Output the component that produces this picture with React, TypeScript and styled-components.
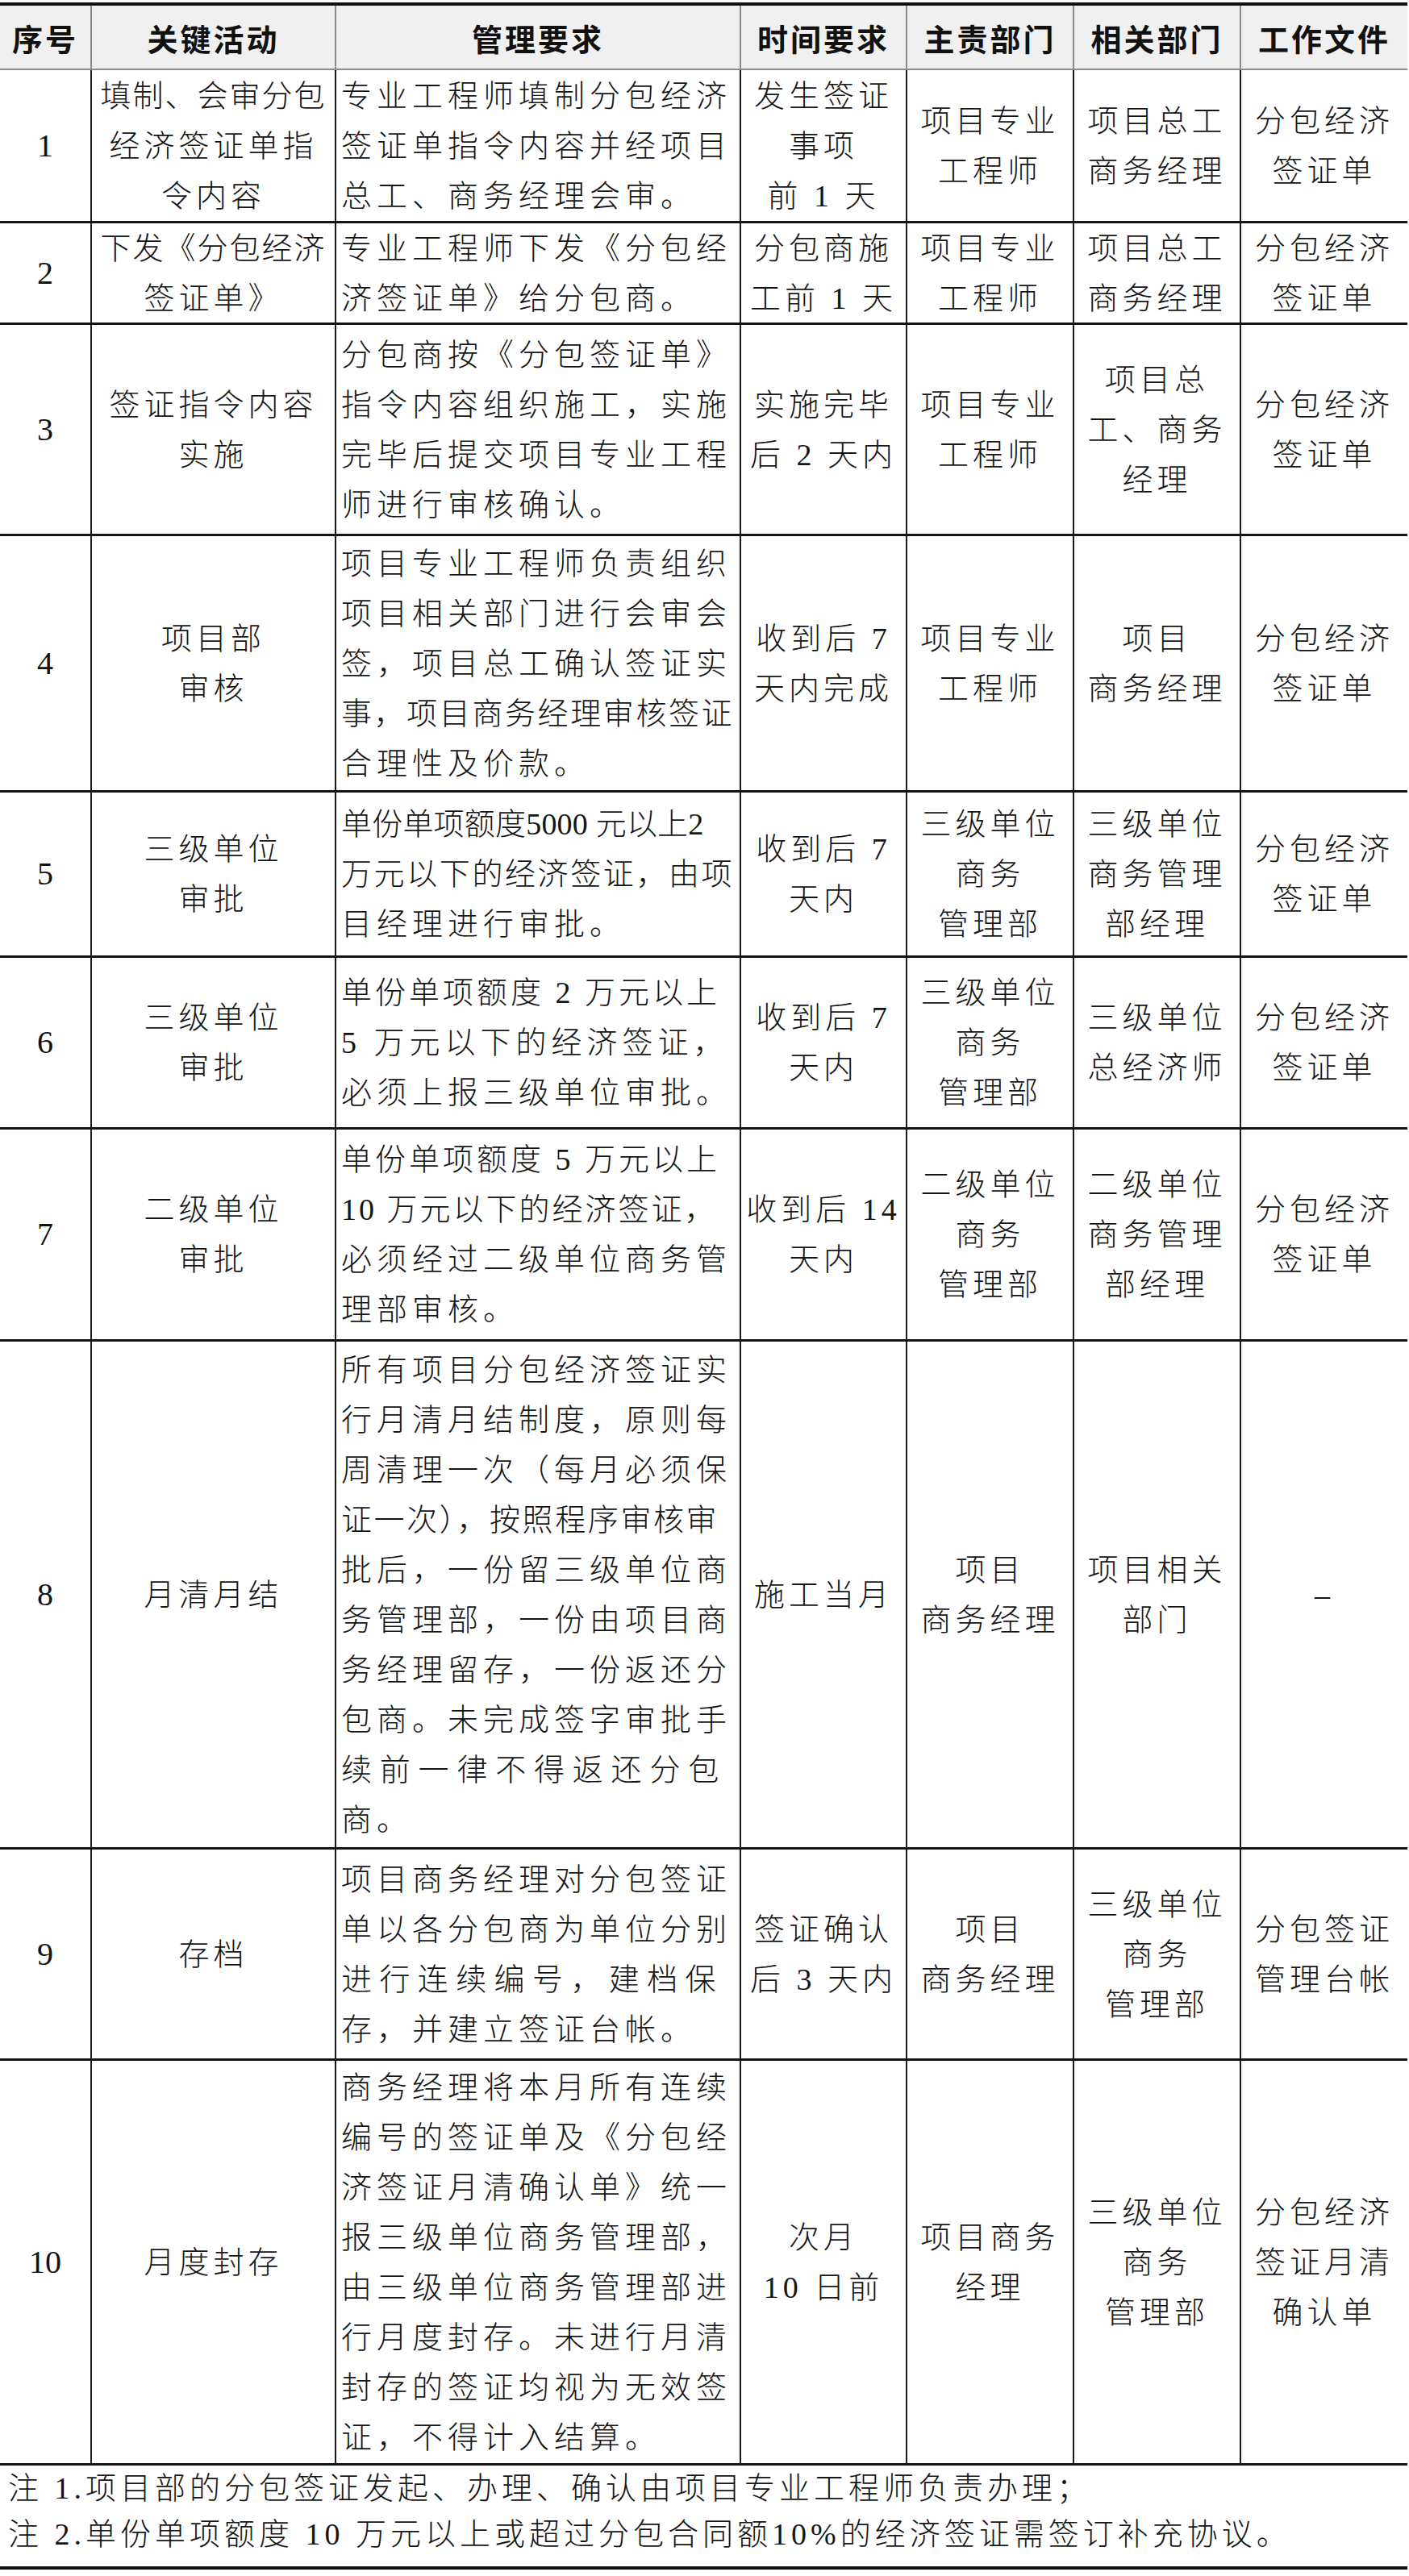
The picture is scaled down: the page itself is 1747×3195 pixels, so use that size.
import styled, { createGlobalStyle } from 'styled-components'

const GlobalStyle = createGlobalStyle`
  html, body {
    margin: 0;
    padding: 0;
    background: #fff;
  }
  body {
    font-family: "Liberation Serif", "Noto Sans CJK SC", serif;
    color: #111;
  }
`

// column widths, borders included (boundaries at 113 / 416 / 918 / 1124 / 1331 / 1538)
const COLS = '112px 303px 502px 206px 207px 207px 208px'

type Ln = string | [string, number]

type Item = {
  no: string
  h: number
  act: Ln[]
  req: Ln[]
  time: Ln[]
  main: Ln[]
  rel: Ln[]
  doc: Ln[]
}

const HEAD = ['序号', '关键活动', '管理要求', '时间要求', '主责部门', '相关部门', '工作文件']

const ROWS: Item[] = [
  {
    no: '1',
    h: 190,
    act: [['填制、会审分包', 2], '经济签证单指', '令内容'],
    req: ['专业工程师填制分包经济', '签证单指令内容并经项目', '总工、商务经理会审。'],
    time: ['发生签证', '事项', '前 1 天'],
    main: ['项目专业', '工程师'],
    rel: ['项目总工', '商务经理'],
    doc: ['分包经济', '签证单'],
  },
  {
    no: '2',
    h: 126,
    act: [['下发《分包经济', 2], '签证单》'],
    req: ['专业工程师下发《分包经', '济签证单》给分包商。'],
    time: ['分包商施', '工前 1 天'],
    main: ['项目专业', '工程师'],
    rel: ['项目总工', '商务经理'],
    doc: ['分包经济', '签证单'],
  },
  {
    no: '3',
    h: 262,
    act: ['签证指令内容', '实施'],
    req: ['分包商按《分包签证单》', '指令内容组织施工，实施', '完毕后提交项目专业工程', '师进行审核确认。'],
    time: ['实施完毕', '后 2 天内'],
    main: ['项目专业', '工程师'],
    rel: ['项目总', '工、商务', '经理'],
    doc: ['分包经济', '签证单'],
  },
  {
    no: '4',
    h: 318,
    act: ['项目部', '审核'],
    req: [
      '项目专业工程师负责组织',
      '项目相关部门进行会审会',
      '签，项目总工确认签证实',
      ['事，项目商务经理审核签证', 2.6],
      '合理性及价款。',
    ],
    time: ['收到后 7', '天内完成'],
    main: ['项目专业', '工程师'],
    rel: ['项目', '商务经理'],
    doc: ['分包经济', '签证单'],
  },
  {
    no: '5',
    h: 205,
    act: ['三级单位', '审批'],
    req: [['单份单项额度5000 元以上2', 0.2], ['万元以下的经济签证，由项', 2.6], '目经理进行审批。'],
    time: ['收到后 7', '天内'],
    main: ['三级单位', '商务', '管理部'],
    rel: ['三级单位', '商务管理', '部经理'],
    doc: ['分包经济', '签证单'],
  },
  {
    no: '6',
    h: 213,
    act: ['三级单位', '审批'],
    req: [['单份单项额度 2 万元以上', 4], '5 万元以下的经济签证，', '必须上报三级单位审批。'],
    time: ['收到后 7', '天内'],
    main: ['三级单位', '商务', '管理部'],
    rel: ['三级单位', '总经济师'],
    doc: ['分包经济', '签证单'],
  },
  {
    no: '7',
    h: 263,
    act: ['二级单位', '审批'],
    req: [['单份单项额度 5 万元以上', 4], ['10 万元以下的经济签证，', 3], '必须经过二级单位商务管', '理部审核。'],
    time: ['收到后 14', '天内'],
    main: ['二级单位', '商务', '管理部'],
    rel: ['二级单位', '商务管理', '部经理'],
    doc: ['分包经济', '签证单'],
  },
  {
    no: '8',
    h: 630,
    act: ['月清月结'],
    req: [
      '所有项目分包经济签证实',
      '行月清月结制度，原则每',
      '周清理一次（每月必须保',
      ['证一次），按照程序审核审', 2.6],
      '批后，一份留三级单位商',
      '务管理部，一份由项目商',
      '务经理留存，一份返还分',
      '包商。未完成签字审批手',
      ['续前一律不得返还分包', 9.8],
      '商。',
    ],
    time: ['施工当月'],
    main: ['项目', '商务经理'],
    rel: ['项目相关', '部门'],
    doc: ['–'],
  },
  {
    no: '9',
    h: 262,
    act: ['存档'],
    req: ['项目商务经理对分包签证', '单以各分包商为单位分别', ['进行连续编号，建档保', 9.4], '存，并建立签证台帐。'],
    time: ['签证确认', '后 3 天内'],
    main: ['项目', '商务经理'],
    rel: ['三级单位', '商务', '管理部'],
    doc: ['分包签证', '管理台帐'],
  },
  {
    no: '10',
    h: 502,
    act: ['月度封存'],
    req: [
      '商务经理将本月所有连续',
      '编号的签证单及《分包经',
      '济签证月清确认单》统一',
      '报三级单位商务管理部，',
      '由三级单位商务管理部进',
      '行月度封存。未进行月清',
      '封存的签证均视为无效签',
      '证，不得计入结算。',
    ],
    time: ['次月', '10 日前'],
    main: ['项目商务', '经理'],
    rel: ['三级单位', '商务', '管理部'],
    doc: ['分包经济', '签证月清', '确认单'],
  },
]

const NOTES = [
  '注 1.项目部的分包签证发起、办理、确认由项目专业工程师负责办理；',
  '注 2.单份单项额度 10 万元以上或超过分包合同额10%的经济签证需签订补充协议。',
]

const Page = styled.div`
  width: 1745px;
  padding-top: 3px;
`

const Table = styled.div`
  border-top: 4px solid #111;
`

const HeadRow = styled.div`
  display: grid;
  grid-template-columns: ${COLS};
  height: 80px;
  box-sizing: border-box;
  background: #f0f0f0;
  border-bottom: 2px solid #8c8c8c;
`

const HeadCell = styled.div<{ $first?: boolean }>`
  display: flex;
  align-items: center;
  justify-content: center;
  border-left: ${p => (p.$first ? 'none' : '2px solid #8c8c8c')};
  font-family: "Noto Sans CJK SC", sans-serif;
  font-weight: 700;
  font-size: 38px;
  letter-spacing: 3px;
  color: #111;
`

const Row = styled.div<{ $h: number }>`
  display: grid;
  grid-template-columns: ${COLS};
  height: ${p => p.$h}px;
  box-sizing: border-box;
  border-bottom: 3px solid #141414;
`

const Cell = styled.div<{ $first?: boolean; $left?: boolean }>`
  display: flex;
  flex-direction: column;
  justify-content: center;
  align-items: ${p => (p.$left ? 'flex-start' : 'center')};
  padding-left: ${p => (p.$left ? '6px' : '0')};
  border-left: ${p => (p.$first ? 'none' : '2px solid #1c1c1c')};
  min-width: 0;
`

const NoText = styled.div`
  font-family: "Liberation Serif", serif;
  font-size: 40px;
  line-height: 62px;
  color: #111;
`

const TextLine = styled.div<{ $ls: number }>`
  font-size: 38px;
  line-height: 62px;
  font-weight: 300;
  white-space: nowrap;
  letter-spacing: ${p => p.$ls}px;
  color: #151515;
`

const Notes = styled.div`
  height: 129px;
  box-sizing: border-box;
  padding-left: 10px;
  border-bottom: 4px solid #111;
`

const NoteLine = styled.div`
  font-size: 38px;
  line-height: 57px;
  font-weight: 300;
  letter-spacing: 5px;
  white-space: nowrap;
  color: #151515;
`

const Lines = ({ lines, ls }: { lines: Ln[]; ls: number }) => (
  <>
    {lines.map((l, i) => {
      const [t, s] = typeof l === 'string' ? [l, ls] : l
      return (
        <TextLine key={i} $ls={s}>
          {t}
        </TextLine>
      )
    })}
  </>
)

export default function App() {
  return (
    <Page>
      <GlobalStyle />
      <Table>
        <HeadRow>
          {HEAD.map((h, i) => (
            <HeadCell key={h} $first={i === 0}>
              {h}
            </HeadCell>
          ))}
        </HeadRow>
        {ROWS.map(r => (
          <Row key={r.no} $h={r.h}>
            <Cell $first>
              <NoText>{r.no}</NoText>
            </Cell>
            <Cell>
              <Lines lines={r.act} ls={5} />
            </Cell>
            <Cell $left>
              <Lines lines={r.req} ls={6} />
            </Cell>
            <Cell>
              <Lines lines={r.time} ls={5} />
            </Cell>
            <Cell>
              <Lines lines={r.main} ls={5} />
            </Cell>
            <Cell>
              <Lines lines={r.rel} ls={5} />
            </Cell>
            <Cell>
              <Lines lines={r.doc} ls={5} />
            </Cell>
          </Row>
        ))}
      </Table>
      <Notes>
        {NOTES.map(n => (
          <NoteLine key={n}>{n}</NoteLine>
        ))}
      </Notes>
    </Page>
  )
}
